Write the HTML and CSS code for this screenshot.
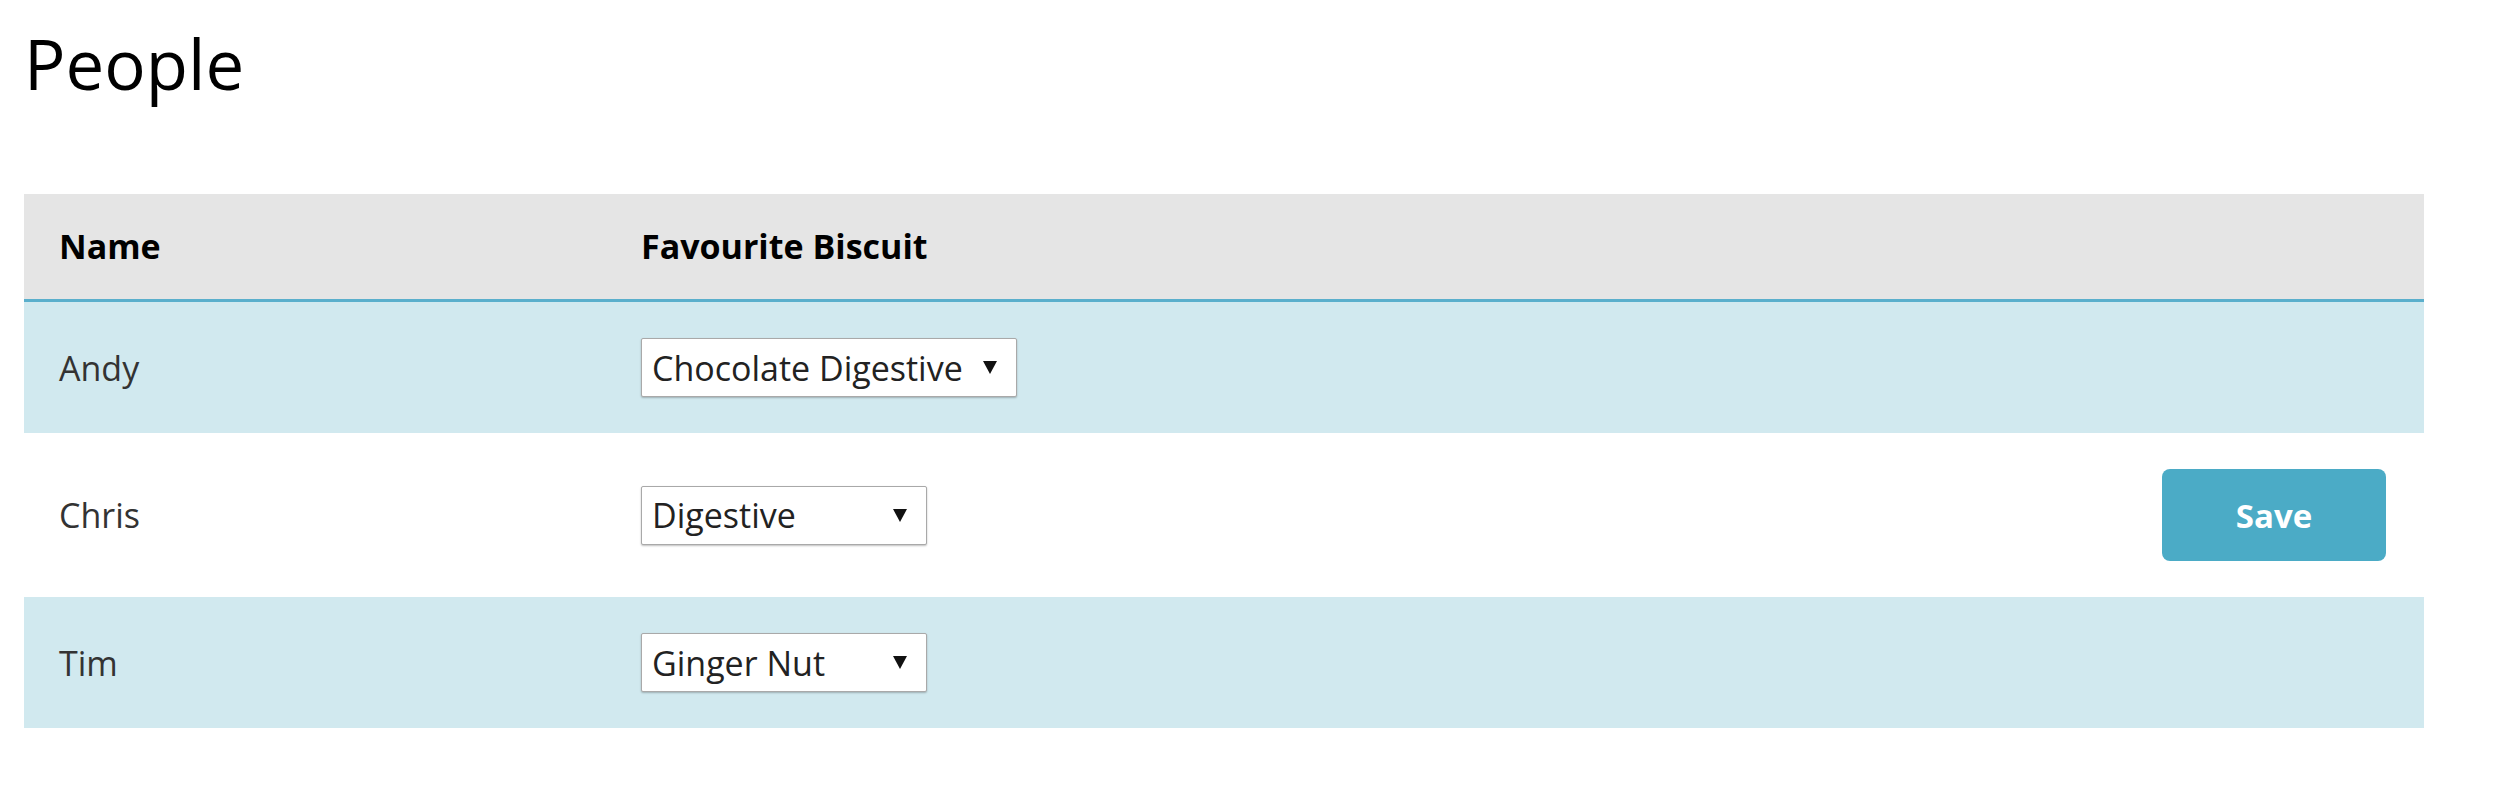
FILE: index.html
```html
<!DOCTYPE html>
<html lang="en">
<head>
<meta charset="utf-8">
<title>People</title>
<link rel="stylesheet" href="styles.css">
</head>
<body>
<main class="page">
  <h1 class="page-title">People</h1>
  <table class="people">
    <thead>
      <tr>
        <th class="col-name">Name</th>
        <th class="col-biscuit">Favourite Biscuit</th>
        <th class="col-action"></th>
      </tr>
    </thead>
    <tbody>
      <tr class="row-alt">
        <td>Andy</td>
        <td>
          <span class="select-wrap">
            <select class="biscuit biscuit-wide">
              <option selected>Chocolate Digestive</option>
              <option>Digestive</option>
              <option>Ginger Nut</option>
            </select>
          </span>
        </td>
        <td class="col-action"></td>
      </tr>
      <tr>
        <td>Chris</td>
        <td>
          <span class="select-wrap">
            <select class="biscuit">
              <option>Chocolate Digestive</option>
              <option selected>Digestive</option>
              <option>Ginger Nut</option>
            </select>
          </span>
        </td>
        <td class="col-action"><button class="save-btn" type="button">Save</button></td>
      </tr>
      <tr class="row-alt">
        <td>Tim</td>
        <td>
          <span class="select-wrap">
            <select class="biscuit">
              <option>Chocolate Digestive</option>
              <option>Digestive</option>
              <option selected>Ginger Nut</option>
            </select>
          </span>
        </td>
        <td class="col-action"></td>
      </tr>
    </tbody>
  </table>
</main>
</body>
</html>
```

FILE: styles.css
```css
html, body {
  margin: 0;
  padding: 0;
  background: #ffffff;
}

body {
  font-family: "Open Sans", "Noto Sans", "Liberation Sans", sans-serif;
  color: #333333;
}

.page {
  padding: 0 24px;
}

.page-title {
  font-size: 69px;
  font-weight: 500;
  line-height: 91px;
  color: #000000;
  margin: 18px 0 85px;
}

.people {
  width: 2400px;
  border-collapse: collapse;
  font-size: 34px;
}

.people th {
  background: #e5e5e5;
  color: #000000;
  font-weight: 700;
  text-align: left;
  line-height: 45px;
  padding: 30px 35px;
  border-bottom: 3px solid #5aafcc;
}

.people .col-name {
  width: 512px;
}

.people td {
  padding: 36px 35px;
  line-height: 46px;
  vertical-align: middle;
  color: #333333;
}

.people td.col-action {
  text-align: right;
  padding-right: 38px;
}

.row-alt td {
  background: #d1e9ef;
}

.select-wrap {
  position: relative;
  display: inline-block;
  vertical-align: middle;
}

.select-wrap::after {
  content: "";
  position: absolute;
  right: 20px;
  top: 23px;
  width: 0;
  height: 0;
  border-left: 7px solid transparent;
  border-right: 7px solid transparent;
  border-top: 13px solid #111111;
  pointer-events: none;
}

.biscuit {
  -webkit-appearance: none;
  appearance: none;
  display: block;
  box-sizing: border-box;
  width: 286px;
  height: 59px;
  margin: 0;
  padding: 0 40px 0 10px;
  font-family: inherit;
  font-size: 34px;
  color: #222222;
  background: #ffffff;
  border: 1px solid #a9a9a9;
  border-radius: 2px;
  box-shadow: 0 1px 2px rgba(0, 0, 0, 0.25);
}

.biscuit-wide {
  width: 376px;
}

.save-btn {
  display: inline-block;
  vertical-align: middle;
  box-sizing: border-box;
  width: 224px;
  height: 92px;
  border: none;
  border-radius: 8px;
  background: #4babc6;
  color: #ffffff;
  font-family: inherit;
  font-size: 33px;
  font-weight: 700;
  cursor: pointer;
}
```
